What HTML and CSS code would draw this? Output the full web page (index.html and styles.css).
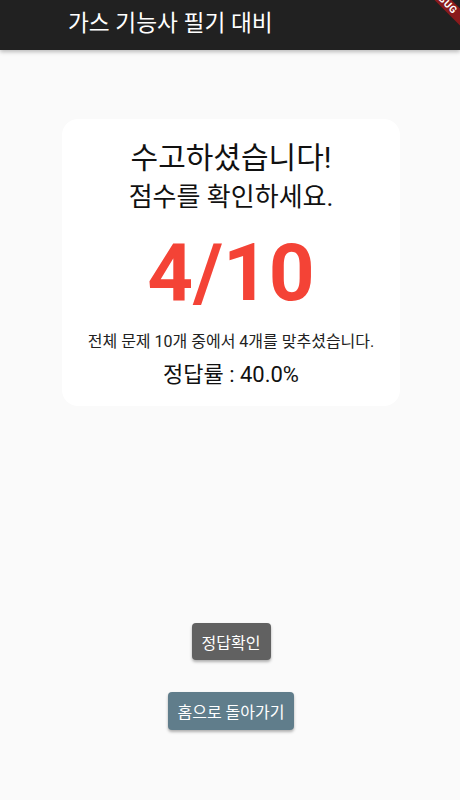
FILE: index.html
```html
<!DOCTYPE html>
<html lang="ko">
<head>
<meta charset="utf-8">
<link rel="stylesheet" href="styles.css">
</head>
<body>
<header class="appbar">
  <h1 class="title">가스 기능사 필기 대비</h1>
</header>
<div class="banner"><span>DEBUG</span></div>
<main class="content">
  <section class="card">
    <p class="head1">수고하셨습니다!</p>
    <p class="head2">점수를 확인하세요.</p>
    <p class="score">4/10</p>
    <p class="detail">전체 문제 10개 중에서 4개를 맞추셨습니다.</p>
    <p class="rate">정답률 : 40.0%</p>
  </section>
  <div class="actions">
    <button class="btn btn-grey">정답확인</button>
    <button class="btn btn-blue">홈으로 돌아가기</button>
  </div>
</main>
</body>
</html>
```
FILE: styles.css
```css
* { box-sizing: border-box; }
html, body { margin: 0; padding: 0; }
body {
  width: 460px;
  height: 800px;
  background: #fafafa;
  font-family: Roboto, "Noto Sans CJK KR", sans-serif;
  overflow: hidden;
  position: relative;
}
.appbar {
  height: 50px;
  background: #212121;
  display: flex;
  align-items: center;
  padding-left: 68px;
  box-shadow: 0 2px 4px rgba(0,0,0,0.25);
  position: relative;
  z-index: 1;
}
.title {
  margin: 0;
  color: #fff;
  font-weight: 400;
  font-size: 22.7px;
  line-height: 1;
  margin-top: -2px;
}
.banner {
  position: absolute;
  top: 0;
  right: 0;
  width: 80px;
  height: 60px;
  overflow: hidden;
  z-index: 2;
}
.banner span {
  position: absolute;
  left: 3px;
  top: -6.5px;
  width: 120px;
  height: 12px;
  background: #8a1a1c;
  color: #fff;
  font-size: 10px;
  font-weight: 700;
  line-height: 12px;
  text-align: center;
  transform: rotate(45deg);
  letter-spacing: 0.6px;
}
.content {
  display: flex;
  flex-direction: column;
  align-items: center;
  padding-top: 69px;
}
.card {
  width: 338px;
  margin-left: 2px;
  background: #fff;
  border-radius: 16px;
  display: flex;
  flex-direction: column;
  align-items: center;
  padding: 19px 0 16px;
}
.card p { margin: 0; color: #111; }
.head1 { font-size: 30px; line-height: 40px; }
.head2 { font-size: 26px; line-height: 38px; }
.score {
  font-size: 80px;
  font-weight: 700;
  color: #f44336 !important;
  line-height: 96px;
  margin-top: 9px !important;
}
.detail { font-size: 16px; line-height: 22px; color: #222 !important; margin-top: 10px !important; }
.rate { font-size: 22px; line-height: 30px; margin-top: 7px !important; }
.actions {
  display: flex;
  flex-direction: column;
  align-items: center;
  gap: 32px;
  margin-top: 217px;
  margin-left: 2px;
}
.btn {
  border: none;
  border-radius: 4px;
  color: #fff;
  font-family: Roboto, "Noto Sans CJK KR", sans-serif;
  font-size: 16px;
  height: 37px;
  padding: 0;
  white-space: nowrap;
  box-shadow: 0 2px 3px rgba(0,0,0,0.3);
}
.btn-grey { background: #616161; width: 79px; }
.btn-blue { background: #607d8b; height: 38px; width: 126px; }
```
